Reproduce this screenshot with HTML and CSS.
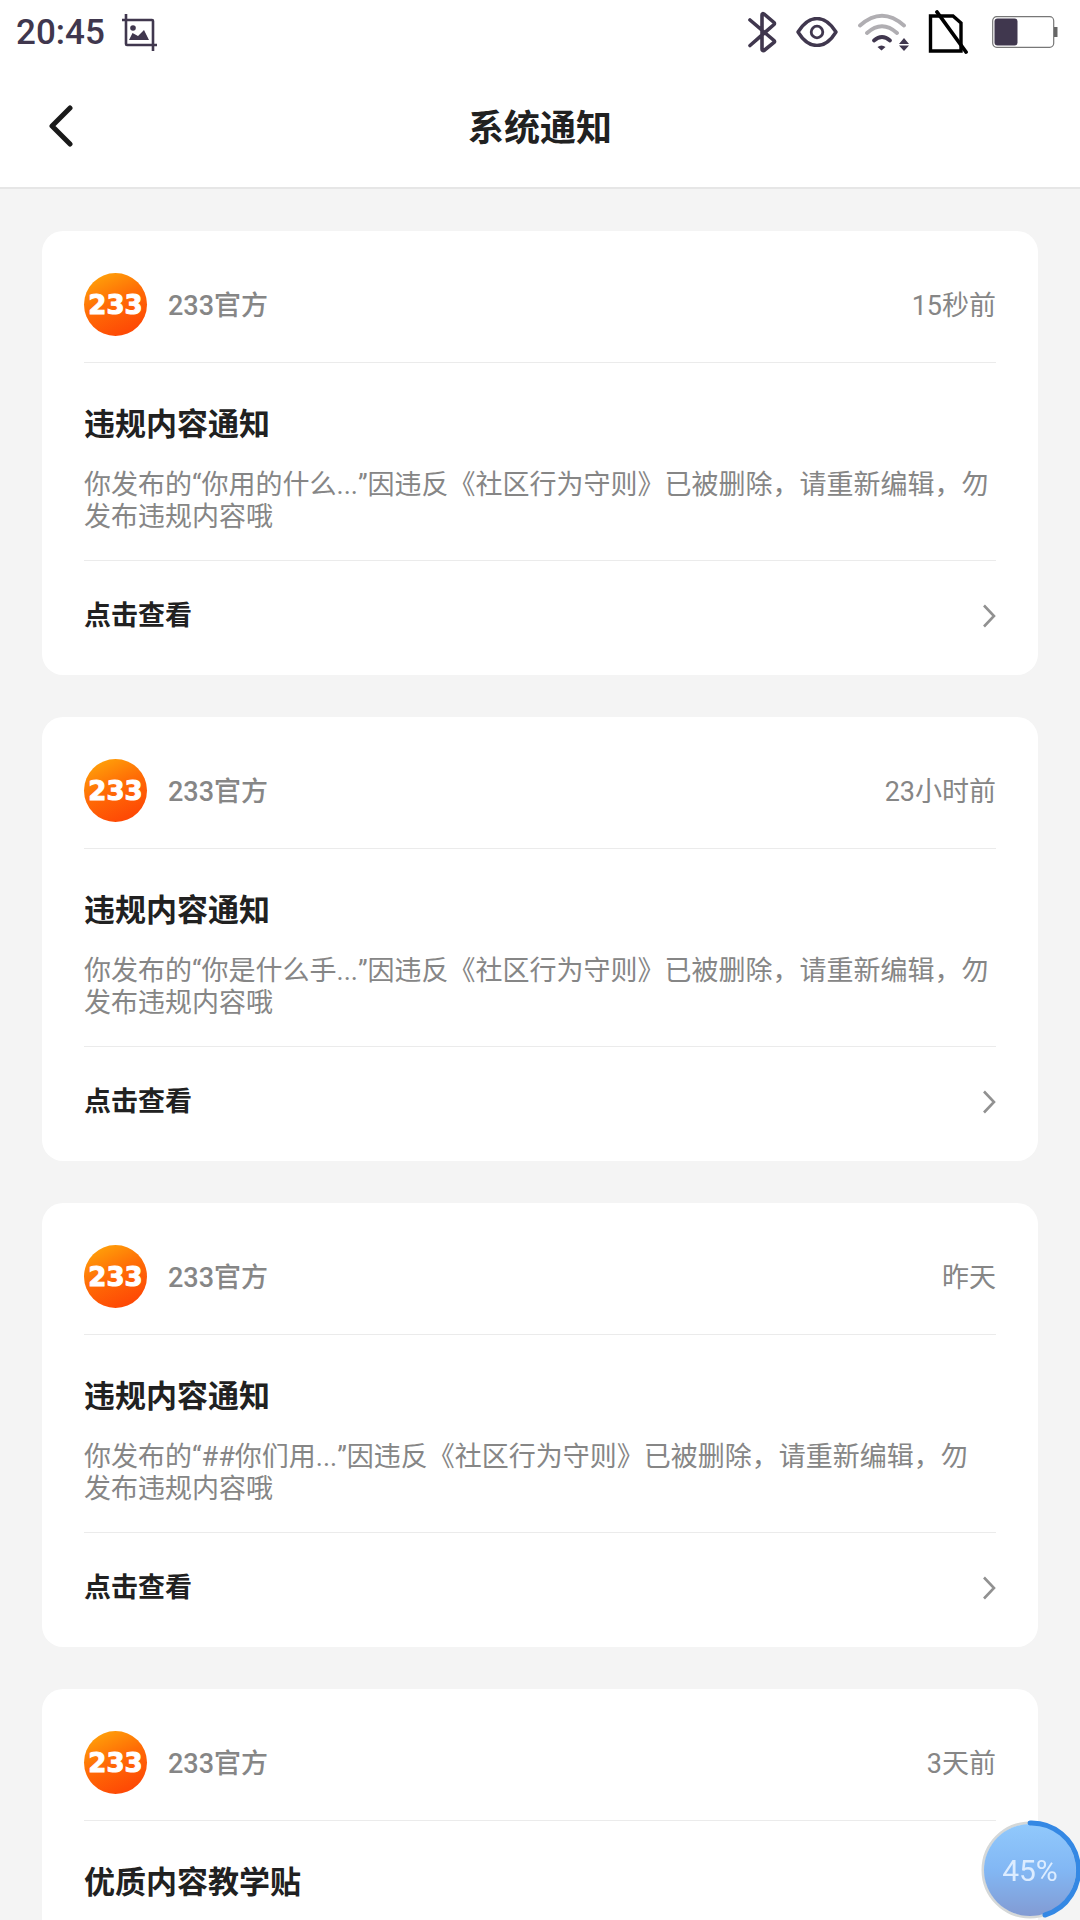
FILE: index.html
```html
<!DOCTYPE html>
<html lang="zh-CN">
<head>
<meta charset="utf-8">
<meta name="viewport" content="width=device-width, initial-scale=1">
<title>系统通知</title>
<link rel="stylesheet" href="styles.css">
</head>
<body>
<svg class="sprite" aria-hidden="true">
  <symbol id="chevron" viewBox="0 0 14 24"><path d="M2 1.5 12 12 2 22.500" fill="none" stroke="#919191" stroke-width="2.600"/></symbol>
</svg>
<div class="app">
  <header class="top">
    <div class="status">
      <div class="status-left">
        <span class="clock">20:45</span>
        <svg class="icon" width="38" height="38" viewBox="0 0 38 38" aria-hidden="true">
          <path d="M5 1v30q0 1 1 1h30M1 7h30q1 0 1 1v30" fill="none" stroke="#40374e" stroke-width="2.600"/>
          <circle cx="12" cy="15" r="2.800" fill="#40374e"/>
          <path d="M8 27l3.500-7 5.500 3 6-6 5 10z" fill="#40374e"/>
        </svg>
      </div>
      <div class="status-right">
        <svg width="30" height="42" viewBox="0 0 30 42" aria-hidden="true">
          <path d="M3 9 27 29.500Q28 30.500 27 31.500L17 39.500Q15 40 15 38V4Q15 2 17 3L27 11.500Q28 12.500 27 13.500L3 34.500" fill="none" stroke="#40374e" stroke-width="3.600" stroke-linecap="round"/>
        </svg>
        <svg width="42" height="30" viewBox="0 0 42 30" aria-hidden="true">
          <path d="M2 15C13-3 29-3 40 15 29 33 13 33 2 15Z" fill="none" stroke="#40374e" stroke-width="3.400" stroke-linejoin="round"/>
          <circle cx="21" cy="15" r="5.800" fill="none" stroke="#40374e" stroke-width="2.800"/>
        </svg>
        <svg width="52" height="38" viewBox="0 0 52 38" aria-hidden="true">
          <g fill="none" stroke-linecap="round">
            <path d="M3 12.500Q25-7 47 12.500M10 20Q25 6.500 40 20" stroke="#b0aeb2" stroke-width="3.800"/>
            <path d="M17 27.500Q25 20.500 33 27.500" stroke="#40374e" stroke-width="3.800"/>
          </g>
          <path d="M20.500 34Q24.500 31 28.500 34L24.500 37.500ZM47 25l5 6H42ZM42 32.500H52L47 38Z" fill="#40374e"/>
        </svg>
        <svg width="40" height="44" viewBox="0 0 40 44" aria-hidden="true">
          <path d="M2.500 6H25L33 13V41H2.500Z" fill="none" stroke="#000" stroke-width="3.400"/>
          <path d="M9 2 38 42" stroke="#000" stroke-width="3.800" stroke-linecap="round"/>
        </svg>
        <svg class="battery" width="66" height="32" viewBox="0 0 66 32" aria-hidden="true">
          <rect x=".7" y=".7" width="61" height="30.600" rx="4" fill="#fff" stroke="#777" stroke-width="1.200"/>
          <rect x="2.500" y="2.500" width="23" height="27" rx="3" fill="#40374e"/>
          <path d="M62 11h3.500v10H62z" fill="#666"/>
        </svg>
      </div>
    </div>
    <nav class="nav">
      <button class="back" type="button" aria-label="返回">
        <svg width="24" height="42" viewBox="0 0 24 42" aria-hidden="true"><path d="M21 3 3 21 21 39" fill="none" stroke="#1a1a1a" stroke-width="5" stroke-linecap="round" stroke-linejoin="round"/></svg>
      </button>
      <h1 class="page-title">系统通知</h1>
    </nav>
  </header>

  <main class="list">
    <article class="card">
      <div class="card-head">
        <span class="avatar">233</span>
        <span class="sender">233官方</span>
        <time class="time">15秒前</time>
      </div>
      <div class="card-body">
        <h2 class="card-title">违规内容通知</h2>
        <p class="text">你发布的“你用的什么...”因违反《社区行为守则》已被删除，请重新编辑，勿发布违规内容哦</p>
      </div>
      <a class="more" href="#"><span class="more-label">点击查看</span><svg width="14" height="24" aria-hidden="true"><use href="#chevron"/></svg></a>
    </article>

    <article class="card">
      <div class="card-head">
        <span class="avatar">233</span>
        <span class="sender">233官方</span>
        <time class="time">23小时前</time>
      </div>
      <div class="card-body">
        <h2 class="card-title">违规内容通知</h2>
        <p class="text">你发布的“你是什么手...”因违反《社区行为守则》已被删除，请重新编辑，勿发布违规内容哦</p>
      </div>
      <a class="more" href="#"><span class="more-label">点击查看</span><svg width="14" height="24" aria-hidden="true"><use href="#chevron"/></svg></a>
    </article>

    <article class="card">
      <div class="card-head">
        <span class="avatar">233</span>
        <span class="sender">233官方</span>
        <time class="time">昨天</time>
      </div>
      <div class="card-body">
        <h2 class="card-title">违规内容通知</h2>
        <p class="text">你发布的“##你们用...”因违反《社区行为守则》已被删除，请重新编辑，勿发布违规内容哦</p>
      </div>
      <a class="more" href="#"><span class="more-label">点击查看</span><svg width="14" height="24" aria-hidden="true"><use href="#chevron"/></svg></a>
    </article>

    <article class="card">
      <div class="card-head">
        <span class="avatar">233</span>
        <span class="sender">233官方</span>
        <time class="time">3天前</time>
      </div>
      <div class="card-body">
        <h2 class="card-title">优质内容教学贴</h2>
      </div>
    </article>
  </main>

  <button class="ball" type="button">
    <svg class="ball-ring" viewBox="0 0 100 100" aria-hidden="true">
      <defs>
        <linearGradient id="ball-fill" x1="0" y1="0" x2="0" y2="1"><stop offset="0" stop-color="#91c9fc"/><stop offset=".5" stop-color="#82b7f4"/><stop offset="1" stop-color="#829bd3"/></linearGradient>
      </defs>
      <circle cx="50" cy="50" r="47" fill="none" stroke="#d5d8d8" stroke-width="3"/>
      <circle cx="50" cy="50" r="46" fill="url(#ball-fill)"/>
      <path d="M50 3A47 47 0 0 1 65 95" fill="none" stroke="#3488e4" stroke-width="5" stroke-linecap="round"/>
    </svg>
    <span class="ball-label">45%</span>
  </button>
</div>
</body>
</html>
```
FILE: styles.css
```css
* {
  box-sizing: border-box;
}

body {
  margin: 0;
  background: #f4f4f4;
  color: #212121;
  font-family: Roboto, "Noto Sans CJK SC", sans-serif;
  font-size: 27px;
}

h1,
h2,
p {
  margin: 0;
}

button {
  padding: 0;
  border: 0;
  background: none;
  font: inherit;
}

svg {
  display: block;
}

.sprite {
  display: none;
}

.app {
  display: flex;
  flex-direction: column;
  height: 100vh;
  overflow: hidden;
}

.top {
  flex: none;
  border-bottom: 2px solid #e6e6e6;
  background: #fff;
}

.status {
  display: flex;
  align-items: center;
  justify-content: space-between;
  height: 64px;
  padding: 0 22px 0 16px;
}

.status-left,
.status-right {
  display: flex;
  align-items: center;
}

.status-left {
  gap: 16px;
}

.status-right {
  gap: 19px;
}

.battery {
  margin-left: 5px;
}

.clock {
  padding-top: 2px;
  color: #40374e;
  font-size: 35px;
  font-weight: 500;
  line-height: 42px;
}

.nav {
  display: grid;
  grid-template-columns: 80px 1fr 80px;
  align-items: center;
  height: 123px;
}

.back {
  display: flex;
  justify-content: flex-end;
  padding-right: 7px;
}

.page-title {
  padding-top: 6px;
  font-size: 36px;
  font-weight: 700;
  line-height: 48px;
  text-align: center;
}

.list {
  display: flex;
  flex: 1;
  flex-direction: column;
  gap: 42px;
  min-height: 0;
  padding: 42px;
  overflow: hidden;
}

.card {
  flex: none;
  min-height: 300px;
  padding: 0 42px;
  border-radius: 21px;
  background: #fff;
}

.card-head {
  display: flex;
  align-items: center;
  gap: 21px;
  padding: 42px 0 26px;
}

.avatar {
  display: flex;
  align-items: center;
  justify-content: center;
  width: 63px;
  height: 63px;
  border-radius: 50%;
  background: linear-gradient(155deg, #ffad0a 0%, #ff6d06 45%, #fe4a05 85%);
  color: #fff;
  font-family: "DejaVu Sans", sans-serif;
  font-size: 26px;
  font-weight: 700;
  -webkit-text-stroke: 1px #fff;
}

.sender,
.time {
  padding-bottom: 2px;
  color: #868686;
}

.sender {
  font-weight: 500;
}

.time {
  margin-left: auto;
}

.card-body {
  padding: 42px 0 27px;
  border-top: 1px solid #ebebeb;
  border-bottom: 1px solid #ebebeb;
}

.card-title {
  font-size: 31px;
  font-weight: 700;
  line-height: 40px;
}

.text {
  padding: 24px 4px 0 0;
  color: #868686;
  font-kerning: none;
  line-height: 32px;
}

.more {
  display: flex;
  align-items: center;
  justify-content: space-between;
  height: 114px;
  padding-bottom: 4px;
  color: #212121;
  font-weight: 700;
  text-decoration: none;
}

.more-label {
  padding-bottom: 5px;
}

.ball {
  position: fixed;
  right: 0;
  bottom: 0;
  width: 100px;
  height: 100px;
}

.ball-label {
  position: absolute;
  inset: 0;
  color: #dcecff;
  font-size: 30px;
  line-height: 102px;
  text-align: center;
}
```
